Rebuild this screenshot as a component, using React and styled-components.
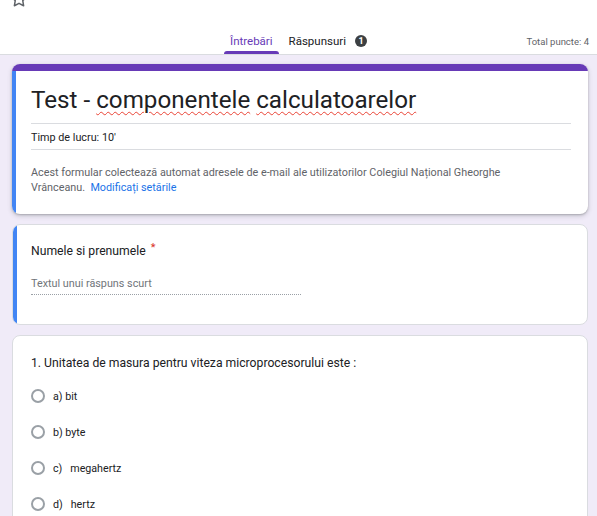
import React from "react";
import styled, { createGlobalStyle } from "styled-components";

const Global = createGlobalStyle`
  html, body { margin: 0; padding: 0; }
  body {
    background: #f0ebf8;
    font-family: Roboto, "Noto Sans", Arial, sans-serif;
    color: #202124;
    overflow: hidden;
  }
`;

const Header = styled.header`
  background: #fff;
  border-bottom: 1px solid #dadce0;
  height: 54px;
  display: flex;
  flex-direction: column;
`;

const StarRow = styled.div`
  height: 28px;
  padding-left: 10px;
  overflow: hidden;
  svg { display: block; margin-top: -10px; }
`;

const TabRow = styled.div`
  height: 26px;
  display: grid;
  grid-template-columns: 1fr auto 1fr;
  align-items: stretch;
`;

const Tabs = styled.nav`
  grid-column: 2;
  display: flex;
  gap: 4px;
`;

const Tab = styled.div`
  position: relative;
  display: flex;
  align-items: center;
  gap: 9px;
  padding: 0 6px;
  font-size: 11.5px;
  color: ${(p) => (p.$active ? "#673ab7" : "#202124")};
  &::after {
    content: "";
    display: ${(p) => (p.$active ? "block" : "none")};
    position: absolute;
    left: 0;
    right: 0;
    bottom: 0;
    height: 3px;
    border-radius: 3px 3px 0 0;
    background: #673ab7;
  }
`;

const Badge = styled.span`
  width: 12px;
  height: 12px;
  border-radius: 50%;
  background: #3c4043;
  color: #fff;
  font-size: 9px;
  font-weight: 700;
  display: inline-flex;
  align-items: center;
  justify-content: center;
`;

const Total = styled.div`
  grid-column: 3;
  justify-self: end;
  align-self: center;
  padding-right: 8px;
  font-size: 9.5px;
  color: #5f6368;
`;

const Main = styled.main`
  padding: 9px 9px 0 12px;
  display: flex;
  flex-direction: column;
  gap: 10px;
`;

const Card = styled.section`
  background: #fff;
  border-radius: 8px;
  overflow: hidden;
  display: flex;
  flex-direction: column;
  border: ${(p) => (p.$raised ? "none" : "1px solid #dadce0")};
  box-shadow: ${(p) =>
    p.$raised ? "0 1px 2px rgba(60,64,67,.3), 0 2px 4px 1px rgba(60,64,67,.15)" : "none"};
`;

const TopBand = styled.div`
  height: 7px;
  background: #673ab7;
`;

const CardRow = styled.div`
  display: flex;
  flex: 1;
`;

const Accent = styled.div`
  width: 4px;
  flex: none;
  background: ${(p) => (p.$on ? "#4285f4" : "transparent")};
`;

const Body = styled.div`
  flex: 1;
  padding: ${(p) => p.$pad || "0"};
`;

const Title = styled.h1`
  margin: 0;
  font-weight: 400;
  font-size: 24.2px;
  line-height: 32px;
  padding-bottom: 7px;
  border-bottom: 1px solid #dadce0;
  color: #202124;
`;

const Spell = styled.span`
  text-decoration-line: underline;
  text-decoration-style: wavy;
  text-decoration-color: #ea4335;
  text-decoration-thickness: 1px;
  text-underline-offset: 3px;
`;

const Field = styled.div`
  font-size: 10.8px;
  line-height: 20px;
  padding: 4px 0 1px;
  border-bottom: 1px solid #dadce0;
`;

const Desc = styled.p`
  margin: 15px 0 0;
  font-size: 10.8px;
  line-height: 15px;
  color: #5f6368;
`;

const Link = styled.a`
  color: #1a73e8;
  text-decoration: none;
`;

const Question = styled.div`
  font-size: 12.2px;
  line-height: 20px;
  color: #202124;
`;

const Req = styled.span`
  color: #d93025;
  margin-left: 5px;
  font-size: 11px;
  vertical-align: top;
  position: relative;
  top: -3px;
`;

const Placeholder = styled.div`
  margin-top: 14px;
  width: 270px;
  font-size: 10.8px;
  line-height: 18px;
  color: #70757a;
  padding-bottom: 1px;
  border-bottom: 1px dotted #9aa0a6;
`;

const Options = styled.div`
  margin-top: 13px;
  display: flex;
  flex-direction: column;
  gap: 16px;
`;

const Option = styled.label`
  display: flex;
  align-items: center;
  gap: 8px;
  height: 20px;
  font-size: 10.7px;
  white-space: pre;
  color: #202124;
`;

const Radio = styled.span`
  width: 14px;
  height: 14px;
  box-sizing: border-box;
  border: 2px solid #9aa0a6;
  border-radius: 50%;
  flex: none;
`;

const StarIcon = () => (
  <svg width="18" height="18" viewBox="0 0 24 24" fill="none" stroke="#5f6368" strokeWidth="2" strokeLinejoin="round">
    <path d="M12 2l3.09 6.26L22 9.27l-5 4.87 1.18 6.88L12 17.77l-6.18 3.25L7 14.14 2 9.27l6.91-1.01L12 2z" />
  </svg>
);

export default function App() {
  const options = ["a) bit", "b) byte", "c)   megahertz", "d)   hertz"];
  return (
    <>
      <Global />
      <Header>
        <StarRow>
          <StarIcon />
        </StarRow>
        <TabRow>
          <Tabs>
            <Tab $active>Întrebări</Tab>
            <Tab>
              Răspunsuri <Badge>1</Badge>
            </Tab>
          </Tabs>
          <Total>Total puncte: 4</Total>
        </TabRow>
      </Header>
      <Main>
        <Card $raised>
          <TopBand />
          <CardRow>
            <Accent $on />
            <Body $pad="13px 17px 19px 15px">
              <Title>
                Test - <Spell>componentele</Spell> <Spell>calculatoarelor</Spell>
              </Title>
              <Field>Timp de lucru: 10'</Field>
              <Desc>
                Acest formular colectează automat adresele de e-mail ale utilizatorilor Colegiul Național Gheorghe
                <br />
                Vrânceanu.{"\u00a0 "}
                <Link href="#">Modificați setările</Link>
              </Desc>
            </Body>
          </CardRow>
        </Card>
        <Card>
          <CardRow>
            <Accent $on />
            <Body $pad="16px 17px 29px 14px">
              <Question>
                Numele si prenumele<Req>*</Req>
              </Question>
              <Placeholder>Textul unui răspuns scurt</Placeholder>
            </Body>
          </CardRow>
        </Card>
        <Card>
          <CardRow>
            <Accent />
            <Body $pad="17px 17px 30px 14px">
              <Question>1. Unitatea de masura pentru viteza microprocesorului este :</Question>
              <Options>
                {options.map((o) => (
                  <Option key={o}>
                    <Radio />
                    {o}
                  </Option>
                ))}
              </Options>
            </Body>
          </CardRow>
        </Card>
      </Main>
    </>
  );
}
